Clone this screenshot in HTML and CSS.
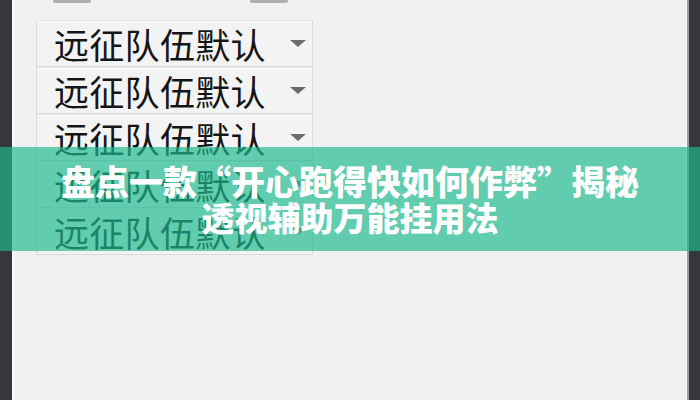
FILE: index.html
```html
<!DOCTYPE html>
<html lang="zh-CN">
<head>
<meta charset="utf-8">
<title>远征队伍</title>
<link rel="stylesheet" href="styles.css">
</head>
<body>
<div class="frame">
  <div class="edge edge-left"></div>
  <main class="panel">
    <div class="toolbar">
      <span class="stub stub-a"></span>
      <span class="stub stub-b"></span>
    </div>
    <ul class="team-list">
      <li class="select"><span class="label">远征队伍默认</span><span class="caret"></span></li>
      <li class="select"><span class="label">远征队伍默认</span><span class="caret"></span></li>
      <li class="select"><span class="label">远征队伍默认</span><span class="caret"></span></li>
      <li class="select"><span class="label">远征队伍默认</span><span class="caret"></span></li>
      <li class="select"><span class="label">远征队伍默认</span><span class="caret"></span></li>
    </ul>
    <div class="divider"></div>
  </main>
  <div class="edge edge-right"></div>
</div>
<div class="banner">
  <p class="banner-line banner-line-long">盘点一款“开心跑得快如何作弊”揭秘</p>
  <p class="banner-line">透视辅助万能挂用法</p>
</div>
</body>
</html>
```

FILE: styles.css
```css
html, body {
  margin: 0;
  padding: 0;
  width: 700px;
  height: 400px;
  overflow: hidden;
  background: #36373a;
  font-family: "Noto Sans CJK SC", "Noto Sans", sans-serif;
}

.frame {
  display: flex;
  height: 400px;
}

.edge {
  background: #36373a;
}

.edge-left {
  width: 12px;
  border-right: 2px solid #fafafa;
}

.edge-right {
  width: 13px;
  border-left: 1px solid #fbfbfb;
  box-shadow: inset 2px 0 0 #9a9b9d;
}

.panel {
  flex: 1;
  background: #f1f1f1;
  padding: 0 0 0 22px;
}

.toolbar {
  height: 20px;
  position: relative;
}

.stub {
  position: absolute;
  top: 0;
  height: 3px;
  background: #b0b0b0;
  border-radius: 0 0 2px 2px;
}

.stub-a {
  left: 17px;
  width: 38px;
}

.stub-b {
  left: 214px;
  width: 38px;
}

.team-list {
  list-style: none;
  margin: 0;
  padding: 0;
  width: 277px;
  display: flex;
  flex-direction: column;
}

.select {
  box-sizing: border-box;
  height: 47px;
  display: flex;
  align-items: center;
  padding: 0 4px 0 17px;
  border: 1px solid #dadada;
  border-top-color: #e2e2e2;
  background: #f3f3f3;
  box-shadow: inset 0 1px 0 #fbfbfb;
}

.label {
  flex: 1;
  font-size: 35px;
  line-height: 40px;
  color: #151515;
  font-weight: 400;
  letter-spacing: 0.3px;
}

.caret {
  width: 0;
  height: 0;
  border-left: 8px solid transparent;
  border-right: 8px solid transparent;
  border-top: 7px solid #6c6c6c;
  margin-right: 2px;
}

.divider {
  margin: 17px 0 0 14px;
  width: 254px;
  height: 1px;
  background: #ececec;
}

.banner {
  position: absolute;
  left: 0;
  top: 147px;
  width: 700px;
  height: 104px;
  box-sizing: border-box;
  padding: 15px 0;
  background: rgba(30, 186, 142, 0.68);
  text-align: center;
}

.banner-line {
  margin: 0;
  font-size: 33px;
  line-height: 37px;
  font-weight: 900;
  color: #ffffff;
  white-space: nowrap;
}

.banner-line-long {
  font-size: 34px;
}
```
